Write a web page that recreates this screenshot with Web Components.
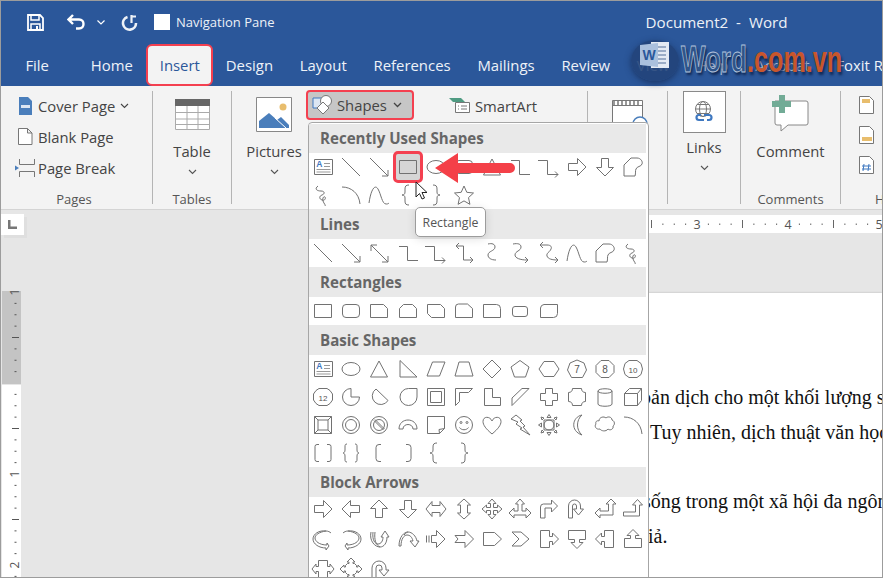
<!DOCTYPE html>
<html lang="vi">
<head>
<meta charset="utf-8">
<title>Word</title>
<style>
  html, body { margin: 0; padding: 0; background: #e6e6e6; }
  body { font-family: "Open Sans", "Noto Sans", sans-serif; }
</style>
</head>
<body>
<word-app></word-app>
<script>
// every gallery icon, drawn on a 24x24 grid
const poly = (pts) => `<path d="M${pts}z"/>`;
const num = (n) => `<text x="12" y="15.5" text-anchor="middle" font-size="${n.length > 1 ? 8 : 10}" font-family="Liberation Sans" fill="#555" stroke="none">${n}</text>`;
const ICONS = {
  textbox: `<path d="M3.5 4.5h18v15h-18z"/><path d="M13 8.5h6M13 11.5h6M5.5 14.5h14M5.5 17h14" stroke="#999"/><text x="8.3" y="12" text-anchor="middle" font-size="8.5" font-weight="700" font-family="Liberation Sans" fill="#3f78c0" stroke="none">A</text>`,
  line: '<path d="M3 3l18 18"/>',
  arrowline: '<path d="M3 3l18 18M21 15v6h-6"/>',
  dblarrow: '<path d="M4 4l17 17M4 10V4h6M21 15v6h-6"/>',
  elbow: '<path d="M3 5.5h8.5v14H22"/>',
  elbowarrow: '<path d="M1 5.5h9.5v14H21M18 16.5l3 3-3 3"/>',
  dblelbow: '<path d="M7 2L4 5l3 3M4 5h7.500v14H21M18 16l3 3-3 3"/>',
  curveconn: '<path d="M8 3c4-1 7 0 7 3 0 4-7 4-7 8 0 3 3 5 8 5"/>',
  curvearrow: '<path d="M5 3c5-1 8 0 8 3 0 4-6 4-6 8 0 3 5 5 12 5M17 16l3 3-3 3"/>',
  dblcurve: '<path d="M6 1L3 4l3 3M3 4h7c4 0 5 2 4 4-1 3-5 4-4 7 1 3 5 4 11 4M18 16l3 3-3 3"/>',
  scurve: '<path d="M2 20C4 6 8 1 11 6s4 15 8 15c1 0 2 0 3-1"/>',
  freeform: '<path d="M3 21V10l7-7h6c4 0 6 4 5 6-1 3-5 2-6 5-1 2 0 4-1 7z"/>',
  scribble: '<path d="M7 3C3 6 6 8 10 8s4 3 1 4-3 4 0 5 4-2 3-3-3 1-2 4 3 4 2 5"/>',
  arc: '<path d="M3 4c9 0 17 6 18 17"/>',
  braceL: '<path d="M13 2c-3 0-4 1-4 4v3c0 2-1 3-3 3 2 0 3 1 3 3v3c0 3 1 4 4 4"/>',
  braceR: '<path d="M9 2c3 0 4 1 4 4v3c0 2 1 3 3 3-2 0-3 1-3 3v3c0 3-1 4-4 4"/>',
  star: poly('12 3l2.800 6.300 6.700.700-5 4.600 1.400 6.700-5.900-3.400-5.900 3.400 1.400-6.700-5-4.600 6.700-.700'),
  rect: '<path d="M3.500 5.500h17v13h-17z"/>',
  roundrect: '<rect x="3.500" y="5.500" width="17" height="13" rx="3.500"/>',
  rect2: '<path d="M3.500 5.500h17v13h-17z"/>',
  round1: '<rect x="3.500" y="5.500" width="17" height="13" rx="3.500"/>',
  snip1: poly('3.500 5.500h13l4 4v9h-17'),
  snip2: poly('7.500 5.500h9l4 4v9h-17v-9'),
  snipdiag: poly('3.500 5.500h13l4 4v9h-13l-4-4'),
  sniprnd: '<path d="M3.500 18.500V8a3 3 0 0 1 3-3h9l5 4.500v9z"/>',
  rnd1: '<path d="M3.500 5.500h13a4 4 0 0 1 4 4v9h-17z"/>',
  rnd2: '<rect x="4.500" y="7.500" width="15" height="10" rx="2.500"/>',
  rnd3: '<path d="M7 5.500h13.500v9a4 4 0 0 1-4 4H3.500V9a4 4 0 0 1 3.500-3.500z"/>',
  oval: '<ellipse cx="12" cy="12" rx="9" ry="6.500"/>',
  triangle: poly('12 4l8.500 16h-17'),
  rtriangle: poly('4 3.500l17 16.500H4'),
  para: poly('8.500 5h12.500l-5.500 14H3'),
  trap: poly('7 5h10l4 14H3'),
  diamond: poly('12 3l9 9-9 9-9-9'),
  pent: poly('12 3.500l9 6.500-3.500 10h-11L3 10'),
  hex: poly('7 4.500h10l5 7.500-5 7.500H7L2 12'),
  hept: poly('12 3l7 3 2.500 7-4 7.500h-11l-4-7.500L5 6') + num('7'),
  oct: poly('8 3.500h8l5 5v7l-5 5H8l-5-5v-7') + num('8'),
  dec: poly('8 3.500h8l4 3 1.500 5.500-1.500 5.500-4 3H8l-4-3L2.500 12 4 6.500') + num('10'),
  dodec: poly('8 3.500h8l3 2 2.500 3.500v6L19 18.500l-3 2H8l-3-2L2.500 15V9L5 5.500') + num('12'),
  pie: '<path d="M12 3.500a8.500 8.500 0 1 0 8.500 8.500H12z"/>',
  chord: '<path d="M9 4a8.500 8.500 0 1 0 12 11.500z"/>',
  tear: '<path d="M21 3.500v8.500a8.500 8.500 0 1 1-8.500-8.500z"/>',
  frame: '<path d="M3.500 3.500h17v17h-17z"/><path d="M6.500 6.500h11v11h-11z"/>',
  halfframe: '<path d="M3.500 3.500h17l-4 4H7.500v9l-4 4z"/>',
  lshape: '<path d="M4.500 3.500h8v9h8v8h-16z"/>',
  stripe: '<path d="M4 20.500V13L14 3.500h7z"/>',
  plus: poly('8.500 3.500h7v5h5v7h-5v5h-7v-5h-5v-7h5'),
  plaque: '<path d="M7.500 3.500h9c0 2.500 1.500 4 4 4v9c-2.500 0-4 1.500-4 4h-9c0-2.500-1.500-4-4-4v-9c2.500 0 4-1.500 4-4z"/>',
  can: '<path d="M5 6v13c0 3 14 3 14 0V6M5 6c0-3 14-3 14 0s-14 3-14 0z"/>',
  cube: '<path d="M3.500 8.500h13v12h-13zM3.500 8.500l5-5h12v12l-4 5M16.500 8.500l4-5"/>',
  bevel: '<path d="M3.500 3.500h17v17h-17zM7 7h10v10H7zM3.500 3.500L7 7M20.500 3.500L17 7M3.500 20.500L7 17M20.500 20.500L17 17"/>',
  donut: '<circle cx="12" cy="12" r="8.500"/><circle cx="12" cy="12" r="5.500"/>',
  nosym: '<circle cx="12" cy="12" r="8.500"/><circle cx="12" cy="12" r="5.500"/><path d="M7 7.500l9.500 9.500M8 6.500l9.500 9.500"/>',
  blockarc: '<path d="M3 16c0-12 18-12 18 0h-4c0-6-10-6-10 0z"/>',
  folded: '<path d="M3.500 3.500h17v12l-5 5h-12zM20.500 15.500l-5.500 1 .5 4"/>',
  smiley: '<circle cx="12" cy="12" r="8.500"/><circle cx="9" cy="9.500" r="1"/><circle cx="15" cy="9.500" r="1"/><path d="M7.500 14.500c2 3 7 3 9 0"/>',
  heart: '<path d="M12 21C6 16 3 12 3 8.500 3 3 10 3 12 8c2-5 9-5 9 .5C21 12 18 16 12 21z"/>',
  bolt: '<path d="M8 2l6 5-2 1 5 5-2 1 7 8-10-6 2-1-6-4 2-2L3 6z"/>',
  sun: '<circle cx="12" cy="12" r="5"/><path d="M7 7h10v10H7zM12 1.500l2 3h-4zM12 22.500l2-3h-4zM1.500 12l3 2v-4zM22.500 12l-3 2v-4z"/><path d="M4 4l3 1-2 2zM20 4l-3 1 2 2zM4 20l3-1-2-2zM20 20l-3-1 2-2z"/>',
  moon: '<path d="M17 2C7 4 5 18 17 22 11 17 11 7 17 2z"/>',
  cloud: '<path d="M6 8c0-4 5-5 7-3 2-2 6-1 6 2 3 1 3 5 1 6 1 3-3 5-5 3-2 3-7 2-8 0-4 1-6-3-4-5-1-2 1-4 3-3z"/>',
  brackets: '<path d="M8 3.500H6a2 2 0 0 0-2 2v13a2 2 0 0 0 2 2h2M16 3.500h2a2 2 0 0 1 2 2v13a2 2 0 0 1-2 2h-2"/>',
  braces: '<path d="M8 3c-2 0-2 1-2 3v3c0 2-1 3-2 3 1 0 2 1 2 3v3c0 2 0 3 2 3M16 3c2 0 2 1 2 3v3c0 2 1 3 2 3-1 0-2 1-2 3v3c0 2 0 3-2 3"/>',
  bracketL: '<path d="M14 3.500h-2a3 3 0 0 0-3 3v11a3 3 0 0 0 3 3h2"/>',
  bracketR: '<path d="M10 3.500h2a3 3 0 0 1 3 3v11a3 3 0 0 1-3 3h-2"/>',
  aR: poly('3.500 8.500h9v-5l8.500 8.500-8.500 8.500v-5h-9'),
  aL: poly('20.500 8.500h-9v-5L3 12l8.500 8.500v-5h9'),
  aU: poly('8.500 20.500v-9h-5L12 3l8.500 8.500h-5v9'),
  aD: poly('8.500 3.500v9h-5L12 21l8.500-8.500h-5v-9'),
  aLR: poly('8 8.500h8v-4l6 7.500-6 7.500v-4H8v4L2 12l6-7.500'),
  aUD: poly('8.500 8h-3L12 2l6.500 6h-3v8h3L12 22l-6.500-6h3'),
  aQuad: poly('10.500 10.500V6.500H8l4-4.500 4 4.500h-2.500v4h4V8l4.500 4-4.500 4v-2.500h-4v4H16L12 22l-4-4.500h2.500v-4h-4V16L2 12l4.500-4v2.500'),
  aLRU: poly('10 14V7H7.500L12 2l4.500 5H14v7h4v-3l5 5-5 5v-3H6v3l-5-5 5-5v3'),
  aBent: poly('3.500 21V10a3 3 0 0 1 3-3h8V3l6 6-6 6v-4H8v10'),
  aUturn: poly('3.500 21V9a6 6 0 0 1 12 0v3h3l-5 6-5-6h3V9a2 2 0 0 0-4 0v12'),
  aLU: poly('15.500 14V7H13l5-5 5 5h-3v11H7v3l-5-5 5-5v3'),
  aBentUp: poly('2.500 15h12V8h-3l5-5.500L21.500 8h-3v11h-16'),
  cR: '<path d="M18 19l-2-3v2C8 18 4 14 4 11s4-6 11-7C8 3 2 7 2 12c0 5 6 9 13 9v2zM15 4c2 0 4 1 5 2"/>',
  cL: '<path d="M6 19l2-3v2c8 0 12-4 12-7s-4-6-11-7c7-1 13 3 13 8 0 5-6 9-13 9v2zM9 4c-2 0-4 1-5 2"/>',
  cU: '<path d="M4 5c-2 9 4 15 9 15 4 0 7-4 7-10h2l-4-6-4 6h2c0 4-2 7-5 7-3 0-6-4-5-12M8 5c-1 8 1 13 5 15"/>',
  cD: '<path d="M3 19C3 10 8 5 12 5s8 4 9 9h2l-4 6-5-6h3c-1-4-3-6-6-6-3 0-6 4-6 11zM8 8c2-2 3-3 4-3"/>',
  aStriped: '<path d="M2.500 8.500v7M5 8.500v7M7.500 8.500h5v-5L21 12l-8.500 8.500v-5h-5z"/>',
  aNotched: poly('3 8.500h10v-5L21.500 12 13 20.500v-5H3l3-3.500'),
  homeplate: poly('3.500 5.500h11l7 6.500-7 6.500h-11'),
  chevron: poly('4 5h9l8 7-8 7H4l7-7'),
  coR: poly('3.500 3.500h9v6h3V6l6 6-6 6v-3.500h-3v6h-9'),
  coD: poly('3.500 3.500h17v9h-6v3h3.500l-6 6-6-6H9.500v-3h-6'),
  coL: poly('20.500 3.500h-9v6h-3V6l-6 6 6 6v-3.500h3v6h9'),
  coU: poly('3.500 20.500h17v-9h-6v-3H18l-6-6-6 6h3.500v3h-6'),
  coLR: poly('7.500 3.500h9v6H19V7l4 5-4 5v-2.500h-2.500v6h-9v-6H5V17l-4-5 4-5v2.500h2.500'),
  coQuad: poly('8.500 6.500h1.500V5H8l4-4 4 4h-2v1.500h1.500L17.500 8.500V10H19V8l4 4-4 4v-2h-1.500v1.500l-2 2H14V19h2l-4 4-4-4h2v-1.500H8.500l-2-2V14H5v2l-4-4 4-4v2h1.500V8.500'),
  circular: '<path d="M5 21V11a7 7 0 0 1 14 0v2h3l-5 6-5-6h3v-2a3 3 0 0 0-6 0v10z"/>'
};

class TitleBar extends HTMLElement {
  connectedCallback() {
    this.attachShadow({ mode: 'open' });
    this.shadowRoot.innerHTML = `
      <style>
        :host { display: flex; align-items: center; height: 45px; background: #2b579a; color: #edf1f7; font-size: 13px; padding: 0 0 3px 26px; box-sizing: border-box; }
        svg { display: block; fill: none; stroke: #fff; }
        .undo { margin-left: 23px; }
        .drop { margin-left: 11px; }
        .redo { margin-left: 16px; }
        .check { width: 16px; height: 16px; background: #fff; margin-left: 16px; margin-right: 6px; }
        .title { margin-left: 371px; font-size: 15.200px; white-space: pre; }
      </style>
      <svg width="17" height="17" viewBox="0 0 17 17" stroke-width="1.8"><path d="M1 1h12l3 3v12H1z"/><path d="M4 1v5h8V1M4 16v-6h9v6" stroke-width="1.500"/><path d="M9 12h2v4H9z" fill="#fff" stroke="none"/></svg>
      <svg class="undo" width="19" height="16" viewBox="0 0 19 16" stroke-width="2.400"><path d="M6 1L1.500 5.500 6 10M2 5.500h10c6 0 6 9 0 9H9"/></svg>
      <svg class="drop" width="8" height="5" viewBox="0 0 8 5" stroke-width="1.200"><path d="M.500.500L4 4 7.500.500"/></svg>
      <svg class="redo" width="17" height="17" viewBox="0 0 17 17" stroke-width="2.600" stroke-opacity=".92"><path d="M6.500 3a6.500 6.500 0 1 0 8.500 6"/><path d="M10.500 1v8M15 2.500l-4.500 0" stroke-width="2.200"/></svg>
      <span class="check"></span>
      <span>Navigation Pane</span>
      <span class="title">Document2  -  Word</span>`;
  }
}
customElements.define('title-bar', TitleBar);

class TabStrip extends HTMLElement {
  connectedCallback() {
    this.attachShadow({ mode: 'open' });
    this.shadowRoot.innerHTML = `
      <style>
        :host { display: flex; height: 40px; background: #2b579a; padding-left: 11px; font-size: 14.900px; align-items: flex-end; }
        span { color: #eef2f8; height: 40px; line-height: 39px; padding: 0 13.400px; white-space: nowrap; box-sizing: border-box; }
        .file { margin-right: 15px; }
        .on { color: #2b579a; background: #f3f3f3; border: 2.500px solid #f44050; border-radius: 6px; height: 42px; line-height: 39px; padding: 0 11.500px; margin: 0 -1px 0 0; }
        .dim { color: #a9bbd6; }
      </style>
      <span class="file">File</span><span>Home</span><span class="on">Insert</span><span>Design</span><span>Layout</span><span>References</span><span>Mailings</span><span>Review</span><span>View</span><span class="dim">Help</span><span class="dim">Acrobat</span><span>Foxit R</span>`;
  }
}
customElements.define('tab-strip', TabStrip);

class RibbonGroup extends HTMLElement {
  connectedCallback() {
    this.attachShadow({ mode: 'open' });
    this.shadowRoot.innerHTML = `
      <style>
        :host { display: flex; flex-direction: column; flex: none; height: 113px; margin-top: 5px; box-sizing: border-box; border-right: 1px solid #b4b4b4; width: var(--w); }
        :host(:last-child) { border-right: 0; flex: 1; }
        .body { flex: 1; min-height: 0; display: flex; }
        .label { height: 13px; line-height: 16.500px; text-align: center; font-size: 13px; color: #555; white-space: nowrap; padding: 0 var(--label-end, 0) 0 var(--label-pad, 0); }
      </style>
      <div class="body"><slot></slot></div>
      <div class="label">${this.getAttribute('label') || ''}</div>`;
  }
}
customElements.define('ribbon-group', RibbonGroup);

class RibbonLarge extends HTMLElement {
  connectedCallback() {
    this.attachShadow({ mode: 'open' });
    const chevron = this.hasAttribute('chevron') ? '<svg class="chev" width="9" height="6" viewBox="0 0 9 6"><path d="M1 1l3.500 3.500L8 1" fill="none" stroke="#555" stroke-width="1.100"/></svg>' : '';
    this.shadowRoot.innerHTML = `
      <style>
        :host { display: flex; flex-direction: column; align-items: center; flex: none; width: var(--bw, 100%); font-size: 14.800px; color: #444; line-height: 22px; text-align: center; }
        .ic { height: var(--ih, 49px); display: flex; align-items: flex-start; }
        .chev { margin-top: 7px; }
      </style>
      <div class="ic"><slot name="icon"></slot></div>
      <slot></slot>
      ${chevron}`;
  }
}
customElements.define('ribbon-large', RibbonLarge);

class RibbonSmall extends HTMLElement {
  connectedCallback() {
    this.attachShadow({ mode: 'open' });
    const chevron = this.hasAttribute('chevron') ? '<svg width="9" height="6" viewBox="0 0 9 6" style="margin-left:5px"><path d="M1 1l3.500 3.500L8 1" fill="none" stroke="#444" stroke-width="1.100"/></svg>' : '';
    this.shadowRoot.innerHTML = `
      <style>
        :host { display: flex; align-items: center; height: 31px; font-size: 14.800px; color: #444; white-space: nowrap; }
        .ic { width: 25px; display: flex; justify-content: center; }
      </style>
      <div class="ic"><slot name="icon"></slot></div>
      <slot></slot>${chevron}`;
  }
}
customElements.define('ribbon-small', RibbonSmall);

class GallerySection extends HTMLElement {
  connectedCallback() {
    this.attachShadow({ mode: 'open' });
    const names = this.getAttribute('shapes').split(',');
    const picked = this.getAttribute('selected');
    const cells = names.map((n) => `
      <div class="cell ${n === picked ? 'sel' : ''}"><svg width="24" height="24" viewBox="0 0 24 24">${ICONS[n]}</svg></div>`).join('');
    this.shadowRoot.innerHTML = `
      <style>
        :host { display: block; }
        h3 { margin: 0 2px 0 0; height: var(--head, 30px); background: #e9e9e9; color: #666; font: 700 15.100px/var(--head, 30px) "Open Sans", sans-serif; padding-left: 11px; }
        .grid { display: grid; grid-template-columns: repeat(12, 28.200px); grid-auto-rows: var(--row, 28px); margin-top: var(--pull, 0); position: relative; }
        .cell { display: flex; align-items: center; justify-content: center; position: relative; }
        .sel { background: #d6d6d6; outline: 3px solid #f44050; outline-offset: -2px; border-radius: 4px; height: 30px; margin-top: -1px; }
        svg { fill: none; stroke: #727272; stroke-width: 1; display: block; }
      </style>
      <h3>${this.getAttribute('title')}</h3>
      <div class="grid">${cells}</div>`;
  }
}
customElements.define('gallery-section', GallerySection);

class ShapeGallery extends HTMLElement {
  connectedCallback() {
    this.attachShadow({ mode: 'open' });
    this.shadowRoot.innerHTML = `
      <style>
        :host { position: absolute; left: 307px; top: 121px; width: 341px; height: 470px; box-sizing: border-box; background: #fff; border: 1.500px solid #a6a6a6; border-radius: 4px; padding-top: 1px; overflow: hidden; }
      </style>
      <slot></slot>`;
  }
}
customElements.define('shape-gallery', ShapeGallery);

class HRuler extends HTMLElement {
  connectedCallback() {
    this.attachShadow({ mode: 'open' });
    const base = 312, zero = 424, unit = 91;
    let marks = '';
    for (let i = -1; i < 48; i++) {
      const x = zero + i * unit / 8 - base;
      if (i % 8 === 0 && i > 0) {
        marks += `<text x="${x}" y="14" text-anchor="middle" font-size="12.500" font-family="Open Sans" fill="#555">${i / 8}</text>`;
      } else if (i % 4 === 0) {
        marks += `<path d="M${x} 5v8" stroke="#666"/>`;
      } else {
        marks += `<rect x="${x - .5}" y="8.500" width="1" height="1.500" fill="#666"/>`;
      }
    }
    this.shadowRoot.innerHTML = `
      <style>
        :host { display: block; height: 18px; margin: 5px 0 0 ${base - 25}px; background: #fff; overflow: hidden; }
        svg { display: block; }
      </style>
      <svg width="600" height="18">${marks}</svg>`;
  }
}
customElements.define('h-ruler', HRuler);

class VRuler extends HTMLElement {
  connectedCallback() {
    this.attachShadow({ mode: 'open' });
    const unit = 91;
    let marks = '';
    for (let i = 0; i < 26; i++) {
      const y = i * unit / 8 + 1;
      if (i === 8) continue; // the margin edge has no mark
      if (i % 8 === 0) {
        marks += `<text transform="translate(17 ${y}) rotate(-90)" text-anchor="middle" font-size="12" font-family="Open Sans" fill="#555">${Math.abs(i / 8 - 1)}</text>`;
      } else if (i % 4 === 0) {
        marks += `<path d="M10 ${y}h7" stroke="#555"/>`;
      } else {
        marks += `<rect x="12.500" y="${y - .5}" width="2" height="1" fill="#555"/>`;
      }
    }
    this.shadowRoot.innerHTML = `
      <style>
        :host { display: block; width: 19px; height: 286px; margin: 56px 0 0 1px; background: linear-gradient(#c4c4c4 93px, #e6e6e6 93px, #e6e6e6 94px, #fff 94px); overflow: hidden; }
        svg { display: block; }
      </style>
      <svg width="19" height="286">${marks}</svg>`;
  }
}
customElements.define('v-ruler', VRuler);

class DocPage extends HTMLElement {
  connectedCallback() {
    this.attachShadow({ mode: 'open' });
    this.shadowRoot.innerHTML = `
      <style>
        :host { display: block; flex: 1; min-height: 0; margin: 60px 0 0 286px; background: #fff; box-shadow: 0 0 2px #b5b5b5; padding-top: 87px; overflow: hidden; font: 20px/34.800px "Liberation Serif", "Times New Roman", serif; color: #111; white-space: nowrap; }
        ::slotted(div) { height: 34.800px; }
      </style>
      <slot></slot>`;
  }
}
customElements.define('doc-page', DocPage);

class WordApp extends HTMLElement {
  connectedCallback() {
    this.attachShadow({ mode: 'open' });
    this.shadowRoot.innerHTML = `
      <style>
        :host { display: block; position: relative; width: 883px; height: 578px; box-sizing: border-box; border: 1px solid #9c9c9c; overflow: hidden; background: #e6e6e6; }
        .ribbon { display: flex; height: 124px; box-sizing: border-box; background: #f3f3f3; border-bottom: 1px solid #d4d4d4; align-items: flex-start; }
        .col { display: flex; flex-direction: column; padding-left: 12px; margin-top: -1px; }
        .shapes { display: flex; align-items: center; gap: 4px; width: 108px; height: 30px; margin: -1px 0 0 5px; box-sizing: border-box; background: #c6c6c6; border: 2.500px solid #f44050; border-radius: 4px; padding-left: 4px; font-size: 14.800px; color: #444; flex: none; }
        .smart { display: flex; align-items: center; gap: 5px; height: 31px; margin: -1px 0 0 35px; font-size: 14.800px; color: #444; }
        .doc { display: flex; height: 367px; }
        .left { width: 24px; flex: none; }
        .corner { width: 23px; height: 21px; margin-top: 4px; background: #fff; box-shadow: 3px 3px 0 #dfdfdf; display: flex; align-items: center; justify-content: center; }
        .right { flex: 1; min-width: 0; display: flex; flex-direction: column; height: 367px; }
        svg { display: block; }
        .tip { position: absolute; left: 414px; top: 206px; width: 71px; height: 30px; box-sizing: border-box; background: #fff; border: 1px solid #9c9c9c; border-radius: 5px; font-size: 12.300px; color: #555; display: flex; align-items: center; justify-content: center; box-shadow: 0 2px 10px rgba(0,0,0,.12); }
        .red { position: absolute; left: 433px; top: 150px; }
        .cursor { position: absolute; left: 414px; top: 180px; }
        .mark { position: absolute; left: 628px; top: 38px; width: 240px; height: 46px; }
        .disc { position: absolute; left: 2px; top: 1px; width: 48px; height: 41px; border-radius: 50%; background: rgba(34,68,122,.9); box-shadow: 0 2px 6px rgba(20,40,80,.7); }
        .disc svg { position: absolute; left: 9px; top: 1px; }
        .wm { position: absolute; top: -3px; font: 700 36px/48px "Liberation Sans", sans-serif; transform-origin: 0 0; white-space: nowrap; text-shadow: 2px 3px 3px rgba(10,30,70,.8); }
        .wm1 { left: 52px; transform: scaleX(.72); color: #2f5489; -webkit-text-stroke: .9px #b4c4dc; }
        .wm2 { left: 118px; transform: scaleX(.7); color: #c8562c; }
      </style>
      <title-bar></title-bar>
      <tab-strip></tab-strip>
      <div class="ribbon">
        <ribbon-group label="Pages" style="--w:152px;--label-end:5px">
          <div class="col">
            <ribbon-small chevron>
              <svg slot="icon" width="15" height="18" viewBox="0 0 15 18"><path d="M1 0h9l4 4v14H1z" fill="#4a7ebb"/><path d="M3 8h9v3H3z" fill="#dce6f2"/></svg>Cover Page
            </ribbon-small>
            <ribbon-small>
              <svg slot="icon" width="15" height="17" viewBox="0 0 15 17"><path d="M.500.500h9l4.500 4.500v11.500H.500zM9.500.500V5H14" fill="#fff" stroke="#777"/></svg>Blank Page
            </ribbon-small>
            <ribbon-small>
              <svg slot="icon" width="21" height="18" viewBox="0 0 21 18" fill="none" stroke="#777"><path d="M4.500 0v5.500h15V0M4.500 18v-5.500h15V18"/><path d="M0 6.500l4 2.500-4 2.500z" fill="#4a7ebb" stroke="none"/></svg>Page Break
            </ribbon-small>
          </div>
        </ribbon-group>
        <ribbon-group label="Tables" style="--w:79px">
          <ribbon-large chevron>
            <svg slot="icon" style="margin-top:8px" width="35" height="31" viewBox="0 0 35 31"><path d="M0 0h35v31H0z" fill="#fff"/><path d="M0 0h35v7H0z" fill="#666"/><path d="M.500 7v23.500h34V7M.500 13.500h34M.500 20h34M.500 25.500h34M12 7v24M23 7v24" fill="none" stroke="#aaa"/></svg>
            Table
          </ribbon-large>
        </ribbon-group>
        <ribbon-group label="" style="--w:356px">
          <div style="display:flex;align-items:flex-start;padding-left:15px;width:100%">
            <ribbon-large chevron style="--bw:54px">
              <svg slot="icon" style="margin-top:6px" width="36" height="35" viewBox="0 0 36 35"><path d="M.500.500h35v34H.500z" fill="#fff" stroke="#888"/><circle cx="27" cy="10" r="3.500" fill="#e8bd6d"/><path d="M3 31V24l10-8 8 7 4-3 8 8v3z" fill="#4a7ebb"/><path d="M19 21l11 10" stroke="#fff"/></svg>
              Pictures
            </ribbon-large>
            <div class="shapes">
              <svg width="21" height="20" viewBox="0 0 21 20"><path d="M1 3h10v10H1z" fill="#dce6f2" stroke="#3f78c0"/><circle cx="14" cy="6" r="5.500" fill="#fff" stroke="#777"/><path d="M11 7l6 6-6 6-6-6z" fill="#fff" stroke="#777"/></svg>
              <span>Shapes</span>
              <svg width="9" height="6" viewBox="0 0 9 6" style="margin-left:2px"><path d="M1 1l3.500 3.500L8 1" fill="none" stroke="#444" stroke-width="1.300"/></svg>
            </div>
            <div class="smart">
              <svg width="21" height="15" viewBox="0 0 21 15"><path d="M0 0h12l4 4H4z" fill="#4f9b82"/><path d="M6.500 4.500h14v10h-14z" fill="#fff" stroke="#777"/><path d="M9 8h1M12 8h6M9 11h1M12 11h6" stroke="#777"/></svg>
              <span>SmartArt</span>
            </div>
          </div>
        </ribbon-group>
        <ribbon-group label="" style="--w:80px">
          <ribbon-large style="--bw:60px;margin-left:8px">
            <svg slot="icon" style="margin:9px 0 0 10px" width="38" height="32" viewBox="0 0 38 32"><path d="M.500.500h30v30H.500z" fill="#fff" stroke="#777"/><path d="M.500 5.500h30" stroke="#777"/><path d="M2 1v4M6 1v4M10 1v4M14 1v4M18 1v4M22 1v4M26 1v4" stroke="#777" stroke-width="1.500"/><circle cx="28" cy="24" r="7" fill="#fff" stroke="#4a7ebb" stroke-width="1.500"/></svg>
            Online<br>Videos
          </ribbon-large>
        </ribbon-group>
        <ribbon-group label="" style="--w:73px">
          <ribbon-large chevron style="--ih:45px">
            <svg slot="icon" width="43" height="42" viewBox="0 0 43 42" style="background:#fff;outline:1px solid #8a8a8a;outline-offset:-1px"><g fill="none" stroke="#777"><circle cx="20" cy="18" r="7.500"/><ellipse cx="20" cy="18" rx="3.500" ry="7.500"/><path d="M12.500 18h15M14 13.500h12M14 22.500h12"/></g><path d="M18 24h-2a2.500 2.500 0 0 0 0 5h5M24 29h2a2.500 2.500 0 0 0 0-5h-5" fill="none" stroke="#3f78c0" stroke-width="2.200"/></svg>
            Links
          </ribbon-large>
        </ribbon-group>
        <ribbon-group label="Comments" style="--w:100px">
          <ribbon-large>
            <svg slot="icon" style="margin-top:4px" width="38" height="37" viewBox="0 0 38 37"><path d="M3 6h31a2 2 0 0 1 2 2v20a2 2 0 0 1-2 2H16l-7 6v-6H5a2 2 0 0 1-2-2z" fill="#fff" stroke="#888"/><path d="M7 0h6v6h6v6h-6v6H7v-6H0V6h7z" fill="#72ab96"/></svg>
            Comment
          </ribbon-large>
        </ribbon-group>
        <ribbon-group label="H" style="--label-pad:34px">
          <div class="col" style="padding-left:18px;gap:12px;padding-top:5px;margin-top:0">
            <svg width="15" height="18" viewBox="0 0 15 18"><path d="M.500.500h10l4 4v13H.500z" fill="#fff" stroke="#777"/><path d="M3 3h8v4H3z" fill="#e8bd6d"/></svg>
            <svg width="15" height="18" viewBox="0 0 15 18"><path d="M.500.500h10l4 4v13H.500z" fill="#fff" stroke="#777"/><path d="M3 11h10v4H3z" fill="#e8bd6d"/></svg>
            <svg width="15" height="18" viewBox="0 0 15 18"><path d="M.500.500h10l4 4v13H.500z" fill="#fff" stroke="#777"/><path d="M5 8l-1 7M10 8l-1 7M3 10h9M3 13h9" stroke="#3f78c0"/></svg>
          </div>
        </ribbon-group>
      </div>
      <div class="doc">
        <div class="left">
          <div class="corner"><svg width="9" height="9" viewBox="0 0 9 9"><path d="M0 0h2.500v6.500H9V9H0z" fill="#777"/></svg></div>
          <v-ruler></v-ruler>
        </div>
        <div class="right">
          <h-ruler></h-ruler>
          <doc-page>
            <div style="padding-left:330px">bản dịch cho một khối lượng sách</div>
            <div style="padding-left:339px">Tuy nhiên, dịch thuật văn học là</div>
            <div></div>
            <div style="padding-left:332px">sống trong một xã hội đa ngôn ngữ</div>
            <div style="padding-left:327px">giả.</div>
          </doc-page>
        </div>
      </div>

      <shape-gallery>
        <gallery-section title="Recently Used Shapes" style="--head:29px" selected="rect" shapes="textbox,line,arrowline,rect,oval,roundrect,triangle,elbow,elbowarrow,aR,aD,freeform,scribble,arc,scurve,braceL,braceR,star"></gallery-section>
        <gallery-section title="Lines" shapes="line,arrowline,dblarrow,elbow,elbowarrow,dblelbow,curveconn,curvearrow,dblcurve,scurve,freeform,scribble"></gallery-section>
        <gallery-section title="Rectangles" shapes="rect2,round1,snip1,snip2,snipdiag,sniprnd,rnd1,rnd2,rnd3"></gallery-section>
        <gallery-section title="Basic Shapes" shapes="textbox,oval,triangle,rtriangle,para,trap,diamond,pent,hex,hept,oct,dec,dodec,pie,chord,tear,frame,halfframe,lshape,stripe,plus,plaque,can,cube,bevel,donut,nosym,blockarc,folded,smiley,heart,bolt,sun,moon,cloud,arc,brackets,braces,bracketL,bracketR,braceL,braceR"></gallery-section>
        <gallery-section title="Block Arrows" style="--row:30px;--pull:-3px" shapes="aR,aL,aU,aD,aLR,aUD,aQuad,aLRU,aBent,aUturn,aLU,aBentUp,cR,cL,cU,cD,aStriped,aNotched,homeplate,chevron,coR,coD,coL,coU,coLR,coQuad,circular"></gallery-section>
      </shape-gallery>

      <svg class="red" width="82" height="34" viewBox="0 0 82 34"><path d="M1 17L24 2v10h52a5 5 0 0 1 0 10H24v10z" fill="#f44048"/></svg>
      <svg class="cursor" width="14" height="20" viewBox="0 0 14 20"><path d="M1 1v15l3.500-3.500L7 18l2.500-1-2.500-5.500h5z" fill="#fff" stroke="#222"/></svg>
      <div class="tip">Rectangle</div>

      <div class="mark">
        <div class="disc"><svg width="30" height="28" viewBox="0 0 30 28"><path d="M11 1h18v26H11z" fill="#e4eaf3"/><path d="M15 6h11M15 10h11M15 14h11M15 18h11M15 22h11" stroke="#8298b8" stroke-width="1.500"/><path d="M0 4l18-2v24L0 24z" fill="#aac0dd"/><text x="9" y="19" text-anchor="middle" font-size="14" font-weight="700" font-family="Liberation Sans" fill="#2b579a">W</text></svg></div>
        <span class="wm wm1">Word</span><span class="wm wm2">.com.vn</span>
      </div>`;
  }
}
customElements.define('word-app', WordApp);
</script>
</body>
</html>
